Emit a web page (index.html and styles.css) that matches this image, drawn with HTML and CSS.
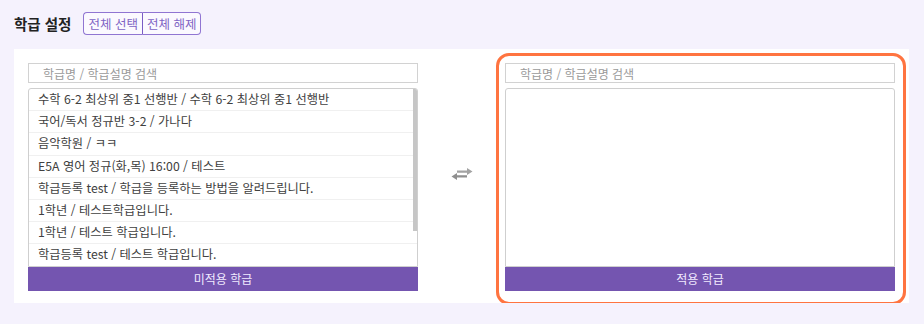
FILE: index.html
```html
<!DOCTYPE html>
<html lang="ko">
<head>
  <meta charset="UTF-8" />
  <meta name="viewport" content="width=device-width, initial-scale=1" />
  <title>학급 설정</title>
  <link rel="stylesheet" href="styles.css">
</head>
<body>

<div class="header">
  <h2>학급 설정</h2>
  <div class="btn-group">
    <button class="btn-outline">전체 선택</button>
    <button class="btn-outline">전체 해제</button>
  </div>
</div>

<div class="panel">
  <div class="column">
    <input class="search" type="text" placeholder="학급명 / 학급설명 검색">
    <div class="list-wrap">
      <ul class="class-list">
        <li>수학 6-2 최상위 중1 선행반 / 수학 6-2 최상위 중1 선행반</li>
        <li>국어/독서 정규반 3-2 / 가나다</li>
        <li>음악학원 / ㅋㅋ</li>
        <li>E5A 영어 정규(화,목) 16:00 / 테스트</li>
        <li>학급등록 test / 학급을 등록하는 방법을 알려드립니다.</li>
        <li>1학년 / 테스트학급입니다.</li>
        <li>1학년 / 테스트 학급입니다.</li>
        <li>학급등록 test / 테스트 학급입니다.</li>
      </ul>
      <div class="scroll-thumb"></div>
    </div>
    <div class="list-footer">미적용 학급</div>
  </div>

  <div class="swap">
    <svg width="22" height="12" viewBox="0 0 22 12">
      <path d="M6 2.4h10V0l5.5 3.5L16 7V4.8H6z" fill="#a3a3a3"/>
      <path d="M16 7.2H6V5L0.5 8.5 6 12V9.6h10z" fill="#8f8f8f"/>
    </svg>
  </div>

  <div class="column selected">
    <input class="search" type="text" placeholder="학급명 / 학급설명 검색">
    <div class="list-wrap">
      <ul class="class-list"></ul>
    </div>
    <div class="list-footer">적용 학급</div>
  </div>
</div>

</body>
</html>
```

FILE: styles.css
```css
body {
  margin: 0;
  padding: 12px 15px 0 14px;
  background-color: #f5f2fd;
  font-family: "Noto Sans CJK KR", "Noto Sans", sans-serif;
  color: #333;
}

.header {
  display: flex;
  align-items: center;
  height: 23px;
  margin-bottom: 14px;
}

h2 {
  margin: 0 12px 0 0;
  font-size: 14.5px;
  font-weight: bold;
  color: #222;
}

.btn-group {
  display: flex;
}

.btn-outline {
  height: 23px;
  padding: 0 4px;
  border: 1px solid #9075d2;
  background: #fbf9ff;
  color: #8064c4;
  font-family: inherit;
  font-size: 12.5px;
  line-height: 20px;
}

.btn-outline:first-child {
  border-radius: 4px 0 0 4px;
  border-right: 1px solid #7a5cc4;
}

.btn-outline:last-child {
  border-radius: 0 4px 4px 0;
  border-left: none;
}

.panel {
  display: flex;
  background-color: #fff;
  padding: 14px 14px 12px;
}

.column {
  width: 390px;
  display: flex;
  flex-direction: column;
}

.swap {
  flex: 1;
  display: flex;
  align-items: center;
  justify-content: center;
  padding-bottom: 6px;
}

.selected {
  position: relative;
}

.selected::after {
  content: "";
  position: absolute;
  top: -10px;
  left: -9px;
  right: -11px;
  bottom: -14px;
  border: 3px solid #ff7440;
  border-radius: 13px;
  pointer-events: none;
}

.search {
  box-sizing: border-box;
  height: 20px;
  margin: 0 0 5px;
  padding: 0 14px;
  border: 1px solid #d2d2d2;
  font-family: inherit;
  font-size: 12px;
  color: #333;
  outline: none;
}

.search::placeholder {
  color: #9a9a9a;
}

.list-wrap {
  position: relative;
  box-sizing: border-box;
  height: 179px;
  border: 1px solid #cfcfcf;
  border-radius: 3px 3px 0 0;
  overflow: hidden;
}

.class-list {
  margin: 0;
  padding: 0;
  list-style: none;
}

.class-list li {
  padding: 0 9px;
  font-size: 12.25px;
  line-height: 21.2px;
  color: #404040;
  border-bottom: 1px solid #f0f0f0;
  white-space: nowrap;
}

.scroll-thumb {
  position: absolute;
  top: 0;
  right: 0;
  width: 4px;
  height: 142px;
  background: #c6c6c6;
}

.list-footer {
  height: 24px;
  line-height: 24px;
  background-color: #7455b0;
  color: #f1ebff;
  font-size: 12px;
  text-align: center;
}
```
